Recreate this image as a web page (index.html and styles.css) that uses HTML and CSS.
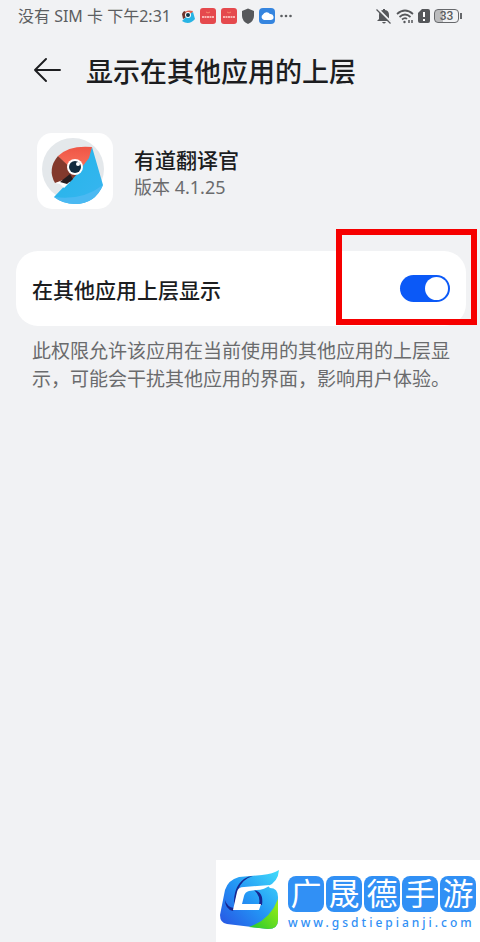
FILE: index.html
```html
<!DOCTYPE html>
<html lang="zh-CN">
<head>
<meta charset="utf-8">
<meta name="viewport" content="width=device-width, initial-scale=1">
<title>显示在其他应用的上层</title>
<link rel="stylesheet" href="styles.css">
</head>
<body>
<div class="screen">
  <div class="status">
    <span class="status-text">没有 SIM 卡 下午2:31</span>
    <div class="status-apps">
      <svg width="14" height="16" viewBox="0 0 14 16" aria-hidden="true"><path d="M2 6Q5 1 12 3L9 9H3Z" fill="#e0604c"/><path d="M1 6Q2 3 4 3L6 9 2 11Z" fill="#70352c"/><path d="M12 4L14 11Q8 18 1 13L7 7Z" fill="#28b4e4"/><circle cx="7" cy="7" r="3" fill="#fff"/><circle cx="7" cy="7" r="2" fill="#173746"/></svg>
      <svg width="16" height="16" viewBox="0 0 16 16" aria-hidden="true"><rect width="16" height="16" rx="3" fill="#e5494d"/><path d="M2 9H14" stroke="#f9b4b1" stroke-width="2" stroke-dasharray="2 .5"/><path d="M6 4Q8 6 10 4" fill="none" stroke="#f58b6c"/></svg>
      <svg width="16" height="16" viewBox="0 0 16 16" aria-hidden="true"><rect width="16" height="16" rx="3" fill="#e5494d"/><path d="M2 9H14" stroke="#f9b4b1" stroke-width="2" stroke-dasharray="2 .5"/><path d="M6 4Q8 6 10 4" fill="none" stroke="#f58b6c"/></svg>
      <svg width="12" height="16" viewBox="0 0 12 16" aria-hidden="true"><path d="M6 0.5L12 3V8Q12 13 6 16Q0 13 0 8V3Z" fill="#56585b"/></svg>
      <svg width="16" height="16" viewBox="0 0 16 16" aria-hidden="true"><rect width="16" height="16" rx="4" fill="#3585df"/><path d="M5 12A3 3 0 0 1 4 6.500A4 4 0 0 1 11 6A3 3 0 0 1 12 12Z" fill="#fff"/></svg>
      <svg width="12" height="16" viewBox="0 0 12 16" fill="#5c5e61" aria-hidden="true"><circle cx="1.500" cy="8" r="1.300"/><circle cx="6" cy="8" r="1.300"/><circle cx="10.500" cy="8" r="1.300"/></svg>
    </div>
    <div class="status-system">
      <svg width="16" height="16" viewBox="0 0 16 16" aria-hidden="true"><path d="M3 11V7Q3 2.500 7 2V1H9V2Q13 2.500 13 7V11L15 13H1Z" fill="#55575a"/><path d="M6 14H10Q8 17 6 14Z" fill="#55575a"/><path d="M1.500 0.500L15.500 14.500" stroke="#f1f2f4" stroke-width="2"/><path d="M0.500 1.500L14.500 15.500" stroke="#55575a" stroke-width="1.300"/></svg>
      <svg width="18" height="16" viewBox="0 0 18 16" fill="none" stroke="#55575a" stroke-width="1.700" aria-hidden="true"><path d="M1 6Q9 -1 17 6M3.500 9Q9 4 14.500 9M6 11.500Q9 9 11 11"/><circle cx="8.500" cy="14" r="1.200" fill="#55575a" stroke="none"/><path d="M13 12V15M16 12V15" stroke-width="1.500"/></svg>
      <svg width="12" height="16" viewBox="0 0 12 16" aria-hidden="true"><path d="M4 1H10Q12 1 12 3V13Q12 15 10 15H2Q0 15 0 13V5Z" fill="#55575a"/><path d="M6 4V9M6 11V13" stroke="#fff" stroke-width="2"/></svg>
      <span class="battery"><span class="battery-level">33</span></span>
    </div>
  </div>

  <header class="header">
    <button class="back" type="button" aria-label="返回">
      <svg width="28" height="26" viewBox="0 0 28 26" fill="none" stroke="#1d1e20" stroke-width="1.900" stroke-linecap="round" stroke-linejoin="round"><path d="M12 2L1 13L12 24M1 13H26"/></svg>
    </button>
    <h1 class="title">显示在其他应用的上层</h1>
  </header>

  <main>
    <section class="app">
      <svg class="app-icon" width="76" height="76" viewBox="0 0 76 76" aria-hidden="true">
        <defs><linearGradient id="body" x1="0" y1="0" x2="1" y2="1"><stop offset="0" stop-color="#22b5e8"/><stop offset="1" stop-color="#38b5f0"/></linearGradient>
        <linearGradient id="head" x1="0" y1="0" x2="0" y2="1"><stop offset="0" stop-color="#ef5545"/><stop offset="1" stop-color="#fb7963"/></linearGradient></defs>
        <rect width="76" height="76" rx="15" fill="#fff"/>
        <circle cx="36" cy="36" r="31" fill="#e4e8eb"/>
        <path d="M55 14L66 52Q58 71 38 71Q26 71 17 64L39 41Z" fill="url(#body)"/>
        <path d="M66 52Q58 71 38 71Q26 71 17 64Q45 68 66 52Z" fill="#4bb9f2"/>
        <path d="M21 23Q32 12 55 14L52 25L39 42Z" fill="url(#head)"/>
        <path d="M21 23L40 41L33 49L18 50Q10 36 21 23Z" fill="#83392c"/>
        <path d="M18 50L26 47L33 49L27 55L23 51Z" fill="#fff"/>
        <path d="M23 49L33 41L36 46L30 51Z" fill="#271d20"/>
        <circle cx="38" cy="34" r="8" fill="#fff"/><circle cx="38" cy="34" r="6" fill="#122b3e"/><circle cx="41" cy="31" r="2" fill="#fff"/>
      </svg>
      <div class="app-copy">
        <h2 class="app-name">有道翻译官</h2>
        <p class="app-version">版本 4.1.25</p>
      </div>
    </section>

    <div class="setting">
      <label class="setting-label" for="overlay">在其他应用上层显示</label>
      <input class="switch" id="overlay" type="checkbox" role="switch" checked>
      <span class="highlight"></span>
    </div>
    <p class="description">此权限允许该应用在当前使用的其他应用的上层显示，可能会干扰其他应用的界面，影响用户体验。</p>
  </main>

  <footer class="brand">
    <svg class="brand-mark" width="60" height="60" viewBox="0 0 60 60" aria-hidden="true">
      <defs><linearGradient id="ribbon" x1="1" y1="0" x2="0" y2="1"><stop offset="0" stop-color="#42ddfa"/><stop offset=".5" stop-color="#2396f5"/><stop offset="1" stop-color="#2850e2"/></linearGradient>
      <linearGradient id="leaf" x1="0" y1="1" x2="1" y2="0"><stop offset="0" stop-color="#22c832"/><stop offset="1" stop-color="#a1ef12"/></linearGradient></defs>
      <path d="M59 0Q58 12 48 16L50 18Q58 18 58 27V50Q58 59 48 59L7 54Q0 53 0 45L5 20Q8 10 19 7L42 5Q53 4 59 0Z" fill="url(#ribbon)"/>
      <path d="M58 29V50Q58 59 48 59L29 57Q50 50 58 29Z" fill="url(#leaf)"/>
      <path d="M33 6Q22 9 18 20L14 36Q13 17 24 9Q28 6 33 6Z" fill="#17258f"/>
      <path d="M5 30Q7 37 14 38L13 41Q5 39 5 30Z" fill="#17258f"/>
      <path d="M34 20Q44 22 42 35H39Q41 26 34 20Z" fill="#17258f"/>
      <path d="M50 15Q45 20 36 20L29 21Q25 22 24 26L22 34H41L39 40H13L17 22Q18 17 24 17Z" fill="#fff"/>
    </svg>
    <div class="brand-copy">
      <div class="brand-name"><span>广</span><span>晟</span><span>德</span><span>手</span><span>游</span></div>
      <a class="brand-url" href="#">www.gsdtiepianji.com</a>
    </div>
  </footer>
</div>
</body>
</html>
```
FILE: styles.css
```css
* { box-sizing: border-box; }

body {
  margin: 0;
  background: #f1f2f4;
  color: #1c1d1f;
  font-family: "Noto Sans", "Noto Sans CJK SC", sans-serif;
}

h1, h2, p { margin: 0; }

.screen {
  display: flex;
  flex-direction: column;
  min-height: 100vh;
}

.status {
  display: flex;
  align-items: center;
  height: 32px;
  padding: 0 18px;
  color: #5c5e61;
}

.status svg { display: block; }

.status-text {
  min-width: 156px;
  font-size: 16px;
  line-height: 32px;
  white-space: nowrap;
}

.status-apps {
  display: flex;
  align-items: center;
  gap: 5px;
  margin-left: 7px;
}

.status-system {
  display: flex;
  align-items: center;
  gap: 4px;
  margin-left: auto;
}

.battery {
  display: flex;
  align-items: center;
}

.battery-level {
  width: 25px;
  height: 14px;
  border: 1px solid #66686b;
  border-radius: 4px;
  background: linear-gradient(90deg, #bbbcbe 36%, transparent 36%);
  font-family: Roboto, sans-serif;
  font-size: 12px;
  font-weight: 500;
  line-height: 12px;
  text-align: center;
}

.battery::after {
  content: "";
  width: 2px;
  height: 6px;
  margin-left: 1px;
  background: #66686b;
}

.header {
  display: flex;
  align-items: center;
  gap: 24px;
  height: 76px;
  padding: 0 34px;
}

.back {
  padding: 0;
  border: 0;
  background: none;
}

.back svg { display: block; }

.title {
  font-family: "Noto Sans CJK SC", sans-serif;
  padding-top: 2px;
  font-size: 27px;
  font-weight: 500;
  line-height: 40px;
}

.app {
  display: flex;
  align-items: center;
  gap: 21px;
  padding: 25px 37px 42px;
}

.app-copy { padding-top: 4px; }

.app-name {
  font-family: "Noto Sans CJK SC", sans-serif;
  font-size: 21px;
  font-weight: 500;
  line-height: 28px;
}

.app-version {
  color: #6a6b6d;
  font-size: 18px;
  line-height: 28px;
}

.setting {
  position: relative;
  display: flex;
  align-items: center;
  justify-content: space-between;
  height: 75px;
  margin: 0 14px 0 16px;
  padding: 0 16px;
  border-radius: 22px;
  background: #fff;
}

.setting-label {
  font-family: "Noto Sans CJK SC", sans-serif;
  font-size: 21px;
  font-weight: 500;
  line-height: 32px;
}

.switch {
  appearance: none;
  display: flex;
  justify-content: flex-end;
  width: 50px;
  height: 27px;
  margin: 0;
  padding: 2px;
  border-radius: 14px;
  background: #0b59f7;
}

.switch::before {
  content: "";
  width: 23px;
  height: 23px;
  border-radius: 50%;
  background: #fff;
}

.switch:not(:checked) {
  justify-content: flex-start;
  background: #c5c7ca;
}

.highlight {
  position: absolute;
  top: -22px;
  right: -11px;
  width: 141px;
  height: 96px;
  border: 6px solid #f60000;
  pointer-events: none;
}

.description {
  padding: 10px 24px 0 32px;
  color: #6a6b6d;
  font-family: "Noto Sans CJK SC", sans-serif;
  font-size: 19px;
  line-height: 28px;
}

.brand {
  display: flex;
  gap: 8px;
  align-self: flex-end;
  width: 264px;
  height: 82px;
  margin-top: auto;
  padding: 10px 4px 0;
  background: #fff;
}

.brand-mark { flex: none; }

.brand-copy { padding-top: 6px; }

.brand-name {
  display: flex;
  gap: 2px;
}

.brand-name span {
  width: 36px;
  height: 36px;
  border-radius: 8px;
  background: #3190f5;
  color: #fff;
  font-size: 31px;
  line-height: 34px;
  text-align: center;
}

.brand-url {
  display: block;
  color: #3190f5;
  font-size: 12px;
  font-weight: 500;
  letter-spacing: 3px;
  line-height: 22px;
  text-decoration: none;
}
```
